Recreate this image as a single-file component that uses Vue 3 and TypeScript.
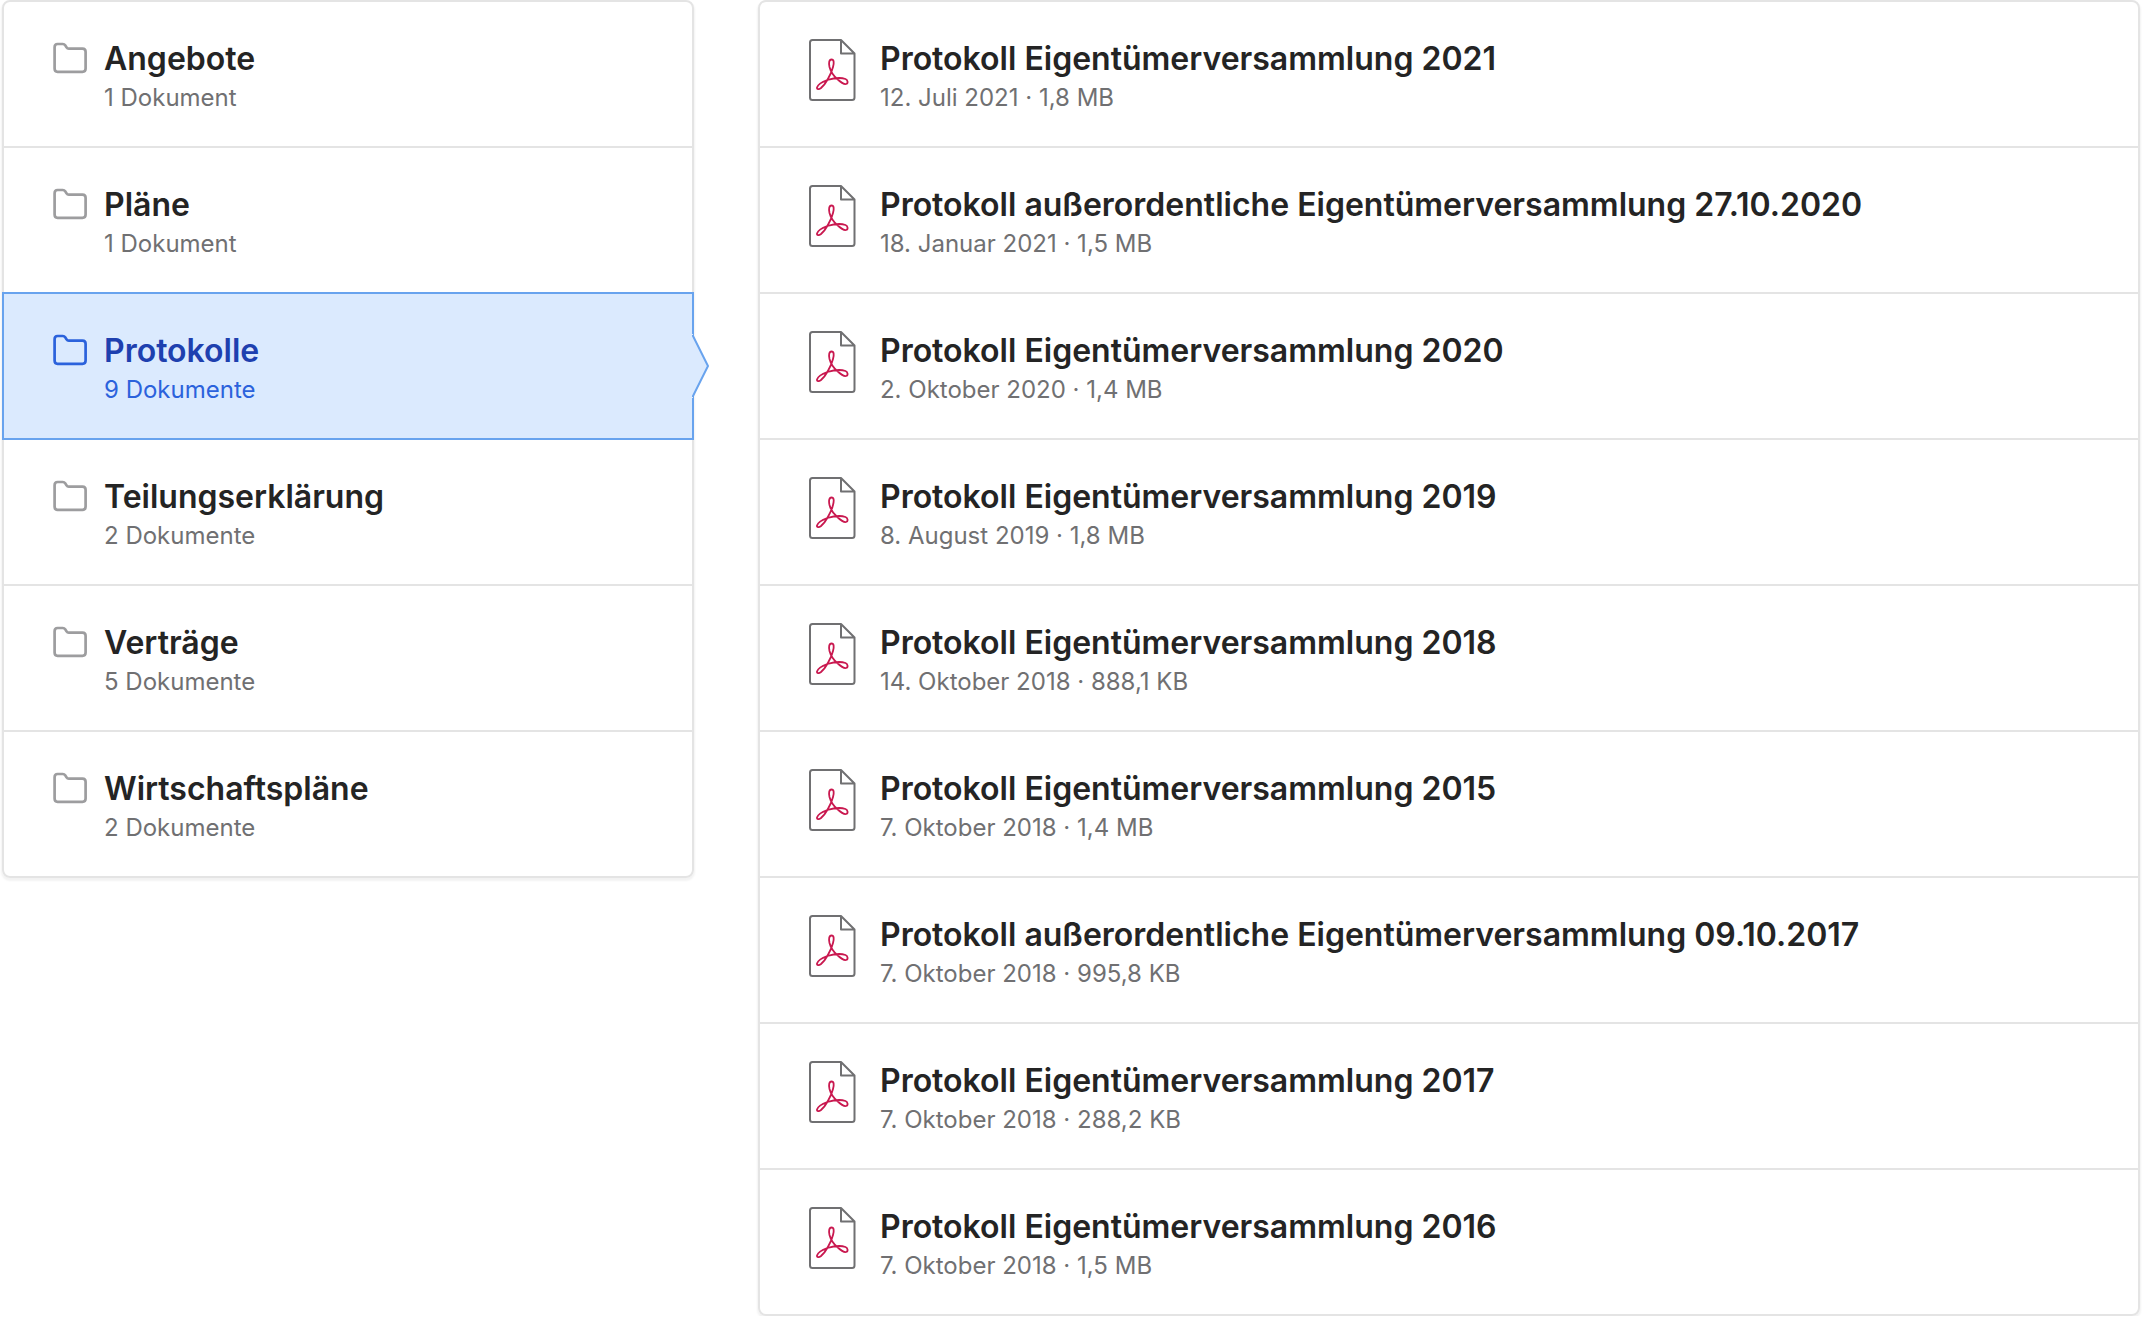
<script setup lang="ts">
import { ref } from 'vue'

interface Folder {
  name: string
  count: number
}

interface Doc {
  title: string
  date: string
  size: string
}

const folders: Folder[] = [
  { name: 'Angebote', count: 1 },
  { name: 'Pläne', count: 1 },
  { name: 'Protokolle', count: 9 },
  { name: 'Teilungserklärung', count: 2 },
  { name: 'Verträge', count: 5 },
  { name: 'Wirtschaftspläne', count: 2 },
]

const documents: Doc[] = [
  { title: 'Protokoll Eigentümerversammlung 2021', date: '12. Juli 2021', size: '1,8 MB' },
  { title: 'Protokoll außerordentliche Eigentümerversammlung 27.10.2020', date: '18. Januar 2021', size: '1,5 MB' },
  { title: 'Protokoll Eigentümerversammlung 2020', date: '2. Oktober 2020', size: '1,4 MB' },
  { title: 'Protokoll Eigentümerversammlung 2019', date: '8. August 2019', size: '1,8 MB' },
  { title: 'Protokoll Eigentümerversammlung 2018', date: '14. Oktober 2018', size: '888,1 KB' },
  { title: 'Protokoll Eigentümerversammlung 2015', date: '7. Oktober 2018', size: '1,4 MB' },
  { title: 'Protokoll außerordentliche Eigentümerversammlung 09.10.2017', date: '7. Oktober 2018', size: '995,8 KB' },
  { title: 'Protokoll Eigentümerversammlung 2017', date: '7. Oktober 2018', size: '288,2 KB' },
  { title: 'Protokoll Eigentümerversammlung 2016', date: '7. Oktober 2018', size: '1,5 MB' },
]

const selected = ref('Protokolle')

const countLabel = (n: number): string => (n === 1 ? '1 Dokument' : `${n} Dokumente`)
</script>

<template>
  <main class="browser">
    <nav>
      <ul class="list">
        <li v-for="folder in folders" :key="folder.name">
          <a
            href="#"
            class="row folder"
            :class="{ active: folder.name === selected }"
            :aria-current="folder.name === selected ? 'true' : undefined"
            @click.prevent="selected = folder.name"
          >
            <svg class="folder-icon" viewBox="0 0 36 48" fill="none" stroke="currentColor" aria-hidden="true">
              <path
                d="M5.5 10H10.8Q12.3 10 13.2 11.3L14.6 13.4Q15.3 14.6 16.8 14.6H30.5Q33.6 14.6 33.6 17.8V34.6Q33.6 37.8 30.5 37.8H5.5Q2.6 37.8 2.6 34.6V13.2Q2.6 10 5.5 10Z"
                stroke-width="2.7"
                stroke-linejoin="round"
              />
            </svg>
            <span class="text">
              <span class="title">{{ folder.name }}</span>
              <span class="meta">{{ countLabel(folder.count) }}</span>
            </span>
            <svg v-if="folder.name === selected" class="arrow" viewBox="0 0 18 64" aria-hidden="true">
              <path d="M0 0H1V2L16 32L1 62V64H0Z" fill="#dbeafe" />
              <path d="M1 1V2L16 32L1 62V63" fill="none" stroke="#68a3ee" stroke-width="2" />
            </svg>
          </a>
        </li>
      </ul>
    </nav>
    <section>
      <ul class="list">
        <li v-for="doc in documents" :key="doc.title">
          <a href="#" class="row document" @click.prevent>
            <svg class="pdf-icon" viewBox="0 0 48 64" fill="none" aria-hidden="true">
              <path
                d="M4.5 2H33L46.5 15.5V59.5Q46.5 62 44 62H4.5Q2 62 2 59.5V4.5Q2 2 4.5 2ZM33 2V15.5H46.5"
                stroke="#707072"
                stroke-width="2"
                stroke-linejoin="round"
              />
              <path
                d="M23.5 21.5C21 21.5 20.6 25 21.5 29C22.8 34 26.4 38.6 29.3 41C32.4 44 36 46.5 38 46C40.5 45.3 39.8 42 37.5 41C33.5 39.6 26 40 19.3 42C14.5 43.8 9.8 47 9 49.5C8.6 51.5 11 51.6 13 50C16 47.3 18 44.5 19.3 42C21.5 38 23.8 34.5 25 29C26.2 24.5 26 21.5 23.5 21.5Z"
                stroke="#c9184f"
                stroke-width="1.8"
                stroke-linejoin="round"
              />
            </svg>
            <span class="text">
              <span class="title">{{ doc.title }}</span>
              <span class="meta">{{ doc.date }} · {{ doc.size }}</span>
            </span>
          </a>
        </li>
      </ul>
    </section>
  </main>
</template>

<style>
body {
  background: #fff;
}
</style>

<style scoped>
.browser {
  display: grid;
  grid-template-columns: calc((100% - 62px) / 3) minmax(0, 1fr);
  gap: 64px;
  align-items: start;
  padding: 0 2px;
  font-family: Inter, "Liberation Sans", sans-serif;
}

.list {
  list-style: none;
  margin: 0;
  padding: 0;
  border-radius: 8px;
  box-shadow: 0 2px 2px 1px rgba(0, 0, 0, 0.05);
}

li + li {
  margin-top: -2px;
}

.row {
  position: relative;
  display: flex;
  align-items: flex-start;
  padding: 32px 48px 34px;
  border: 2px solid #e4e4e4;
  background: #fff;
  color: #242424;
  text-decoration: none;
}

li:first-child .row {
  border-radius: 8px 8px 0 0;
}

li:last-child .row {
  border-radius: 0 0 8px 8px;
}

.folder {
  gap: 16px;
}

.document {
  gap: 24px;
}

.folder-icon {
  flex: none;
  width: 36px;
  height: 48px;
  color: #9d9d9f;
}

.pdf-icon {
  flex: none;
  width: 48px;
  height: 64px;
  margin-top: 4px;
}

.text {
  min-width: 0;
}

.title,
.meta {
  display: block;
}

.title {
  font-size: 32px;
  line-height: 50px;
  font-weight: 600;
}

.meta {
  font-size: 24px;
  line-height: 28px;
  color: #707072;
}

.active {
  z-index: 1;
  background: #dbeafe;
  border-color: #68a3ee;
  color: #1e40af;
}

.active .folder-icon,
.active .meta {
  color: #2b62dc;
}

.arrow {
  position: absolute;
  left: 100%;
  top: 40px;
  width: 18px;
  height: 64px;
}
</style>
